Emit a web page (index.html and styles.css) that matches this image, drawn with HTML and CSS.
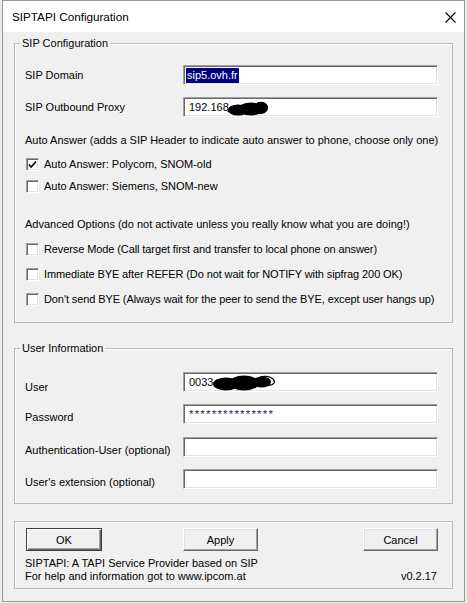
FILE: index.html
```html
<!DOCTYPE html>
<html>
<head>
<meta charset="utf-8">
<title>SIPTAPI Configuration</title>
<link rel="stylesheet" href="styles.css">
</head>
<body>
<div class="window">
  <div class="titlebar">
    <span class="title">SIPTAPI Configuration</span>
    <svg class="close" width="11" height="11" viewBox="0 0 11 11"><path d="M0.5 0.5L10.5 10.5M10.5 0.5L0.5 10.5" stroke="#000" stroke-width="1.1" fill="none"/></svg>
  </div>
  <div class="client">
    <fieldset class="group group-sip">
      <legend class="group-title">SIP Configuration</legend>
      <div class="group-body body-sip">
        <div class="field-row row-center">
          <span class="field-label">SIP Domain</span>
          <div class="textbox"><span class="selected">sip5.ovh.fr</span></div>
        </div>
        <div class="field-row row-center gap-12">
          <span class="field-label">SIP Outbound Proxy</span>
          <div class="textbox"><span class="value">192.168.</span><svg class="blob blob-proxy" width="44" height="17" viewBox="0 0 44 17"><ellipse cx="12" cy="10" rx="10" ry="5.5" fill="#000"/><ellipse cx="25" cy="9" rx="13" ry="6.5" fill="#000"/><ellipse cx="35" cy="8" rx="7" ry="6" fill="#000"/><path d="M2 12c3-5 9-6 10-1" stroke="#000" stroke-width="1.5" fill="none"/><path d="M31 3c6-2 11 1 10 6" stroke="#000" stroke-width="1.3" fill="none"/></svg></div>
        </div>
        <div class="note note-auto">Auto Answer (adds a SIP Header to indicate auto answer to phone, choose only one)</div>
        <div class="check-row cb-first">
          <span class="checkbox"><svg width="9" height="9" viewBox="0 0 9 9"><path d="M1 4.5L3.2 7L8 1.5" stroke="#000" stroke-width="1.7" fill="none"/></svg></span>
          <span class="check-label">Auto Answer: Polycom, SNOM-old</span>
        </div>
        <div class="check-row cb-second">
          <span class="checkbox"></span>
          <span class="check-label">Auto Answer: Siemens, SNOM-new</span>
        </div>
        <div class="note note-adv">Advanced Options (do not activate unless you really know what you are doing!)</div>
        <div class="check-row cb-adv">
          <span class="checkbox"></span>
          <span class="check-label">Reverse Mode (Call target first and transfer to local phone on answer)</span>
        </div>
        <div class="check-row cb-adv">
          <span class="checkbox"></span>
          <span class="check-label">Immediate BYE after REFER (Do not wait for NOTIFY with sipfrag 200 OK)</span>
        </div>
        <div class="check-row cb-adv">
          <span class="checkbox"></span>
          <span class="check-label">Don't send BYE (Always wait for the peer to send the BYE, except user hangs up)</span>
        </div>
      </div>
    </fieldset>

    <fieldset class="group group-user">
      <legend class="group-title">User Information</legend>
      <div class="group-body body-user">
        <div class="field-row row-end mt-17">
          <span class="field-label label-user">User</span>
          <div class="textbox"><span class="value">0033</span><svg class="blob blob-user" width="66" height="18" viewBox="0 0 66 18"><ellipse cx="14" cy="10" rx="13" ry="6.5" fill="#000"/><ellipse cx="32" cy="9" rx="15" ry="7.5" fill="#000"/><ellipse cx="50" cy="8" rx="9" ry="5.5" fill="#000"/><path d="M48 3c9-2 16 2 14 6c-2 3-8 3-10 0" stroke="#000" stroke-width="1.3" fill="none"/><path d="M3 12c-3-5 4-8 9-6" stroke="#000" stroke-width="1.3" fill="none"/></svg></div>
        </div>
        <div class="field-row row-end mt-12">
          <span class="field-label">Password</span>
          <div class="textbox"><span class="value password">***************</span></div>
        </div>
        <div class="field-row row-end mt-13">
          <span class="field-label">Authentication-User (optional)</span>
          <div class="textbox"></div>
        </div>
        <div class="field-row row-end mt-12">
          <span class="field-label">User's extension (optional)</span>
          <div class="textbox"></div>
        </div>
      </div>
    </fieldset>

    <div class="group group-footer">
      <div class="button-row">
        <span class="button button-default">OK</span>
        <span class="button button-apply">Apply</span>
        <span class="button button-cancel">Cancel</span>
      </div>
      <div class="about">
        <div class="about-line">SIPTAPI: A TAPI Service Provider based on SIP</div>
        <div class="about-line about-last">
          <span>For help and information got to www.ipcom.at</span>
          <span class="version">v0.2.17</span>
        </div>
      </div>
    </div>
  </div>
</div>
</body>
</html>
```

FILE: styles.css
```css
* { box-sizing: border-box; }
html, body { margin: 0; padding: 0; }
body {
  width: 467px;
  height: 603px;
  overflow: hidden;
  background: #ececec;
  font-family: "Liberation Sans", Arial, sans-serif;
  font-size: 11px;
  color: #000;
}
.window {
  margin-left: 2px;
  width: 463px;
  height: 602px;
  border: 1px solid #9a9a9a;
  background: #f0f0f0;
  display: flex;
  flex-direction: column;
}
.titlebar {
  flex: none;
  height: 31px;
  background: #fff;
  display: flex;
  align-items: center;
  justify-content: space-between;
  padding: 0 8px 0 9px;
}
.title { font-size: 11.7px; }
.close { display: block; margin-top: 1px; }

.client { padding: 4px 11px 0 11px; }

.group {
  margin: 0;
  padding: 0;
  min-width: 0;
  border: 1px solid #b9b9b9;
  box-shadow: inset 1px 1px 0 #fff;
}
.group-title {
  margin-left: 5px;
  padding: 0 2px;
  line-height: 14px;
  font-size: 11px;
}
.group-body { padding: 0 14px 0 10px; }
.body-sip { padding-top: 15px; padding-bottom: 16px; }
.group-user { margin-top: 18px; }
.body-user { padding-bottom: 14px; }

.field-row { display: flex; height: 20px; }
.row-center { align-items: center; }
.row-end { align-items: flex-end; }
.gap-12, .mt-12 { margin-top: 12px; }
.mt-13 { margin-top: 13px; }
.mt-17 { margin-top: 17px; }
.field-label { width: 158px; line-height: 14px; flex: none; }
.label-user { margin-bottom: -2px; }

.textbox {
  width: 255px;
  height: 20px;
  background: #fff;
  border-top: 1px solid #a0a0a0;
  border-left: 1px solid #a0a0a0;
  border-bottom: 1px solid #fff;
  border-right: 1px solid #fff;
  box-shadow: inset 1px 1px 0 #696969, inset -1px -1px 0 #e3e3e3;
  display: flex;
  align-items: center;
  padding-left: 4px;
  line-height: 14px;
  white-space: nowrap;
  overflow: hidden;
}
.selected {
  background: #000080;
  color: #fff;
  padding: 0 1px;
  margin-left: -2px;
  line-height: 15px;
}
.value { padding-left: 1px; }
.password { color: #1c2a55; letter-spacing: 1.2px; font-size: 11.5px; }
.blob { display: block; flex: none; }
.blob-proxy { margin-left: -6px; margin-top: 3px; }
.blob-user { margin-left: -1px; margin-top: 1px; }

.note { line-height: 14px; white-space: nowrap; }
.note-auto { margin-top: 16px; }
.note-adv { margin-top: 24px; }

.check-row { display: flex; align-items: center; height: 14px; }
.cb-first { margin-top: 10px; }
.cb-second { margin-top: 8px; }
.cb-adv { margin-top: 11px; }
.cb-adv .check-label { letter-spacing: -0.1px; }
.checkbox {
  flex: none;
  width: 13px;
  height: 13px;
  margin-left: 1px;
  margin-right: 5px;
  background: #fff;
  border-top: 1px solid #a0a0a0;
  border-left: 1px solid #a0a0a0;
  border-bottom: 1px solid #fff;
  border-right: 1px solid #fff;
  box-shadow: inset 1px 1px 0 #696969, inset -1px -1px 0 #e3e3e3;
  display: flex;
  align-items: center;
  justify-content: center;
}
.check-label { white-space: nowrap; line-height: 14px; }

.group-footer { margin-top: 17px; padding: 6px 14px 5px 10px; }
.button-row { display: flex; padding-left: 1px; }
.button {
  width: 75px;
  height: 23px;
  display: flex;
  align-items: center;
  justify-content: center;
  background: #f0f0f0;
  border-top: 1px solid #fff;
  border-left: 1px solid #fff;
  border-bottom: 1px solid #696969;
  border-right: 1px solid #696969;
  box-shadow: inset -1px -1px 0 #a0a0a0, inset 1px 1px 0 #e3e3e3;
}
.button-default {
  width: 76px;
  border: 1px solid #3c3c3c;
  box-shadow: inset 1px 1px 0 #fff, inset -1px -1px 0 #696969, inset -2px -2px 0 #a0a0a0;
}
.button-apply { margin-left: 81px; }
.button-cancel { margin-left: auto; }
.about { margin-top: 6px; }
.about-line { line-height: 13px; white-space: nowrap; }
.about-last { display: flex; justify-content: space-between; }
.version { padding-right: 1px; }
```
